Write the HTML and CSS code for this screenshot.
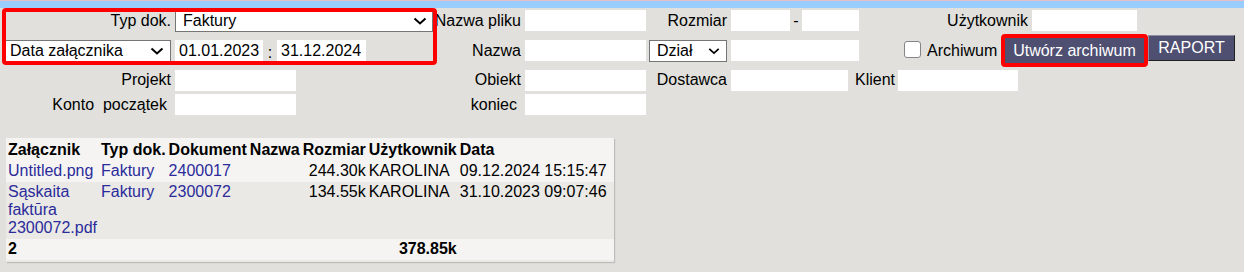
FILE: index.html
```html
<!DOCTYPE html>
<html lang="pl">
<head>
    <meta charset="UTF-8">
    <meta name="viewport" content="width=device-width, initial-scale=1.0">
    <title>Załączniki</title>
    <link rel="stylesheet" href="styles.css">
</head>
<body>
    <div class="topbar"></div>

    <form class="filters">
        <div class="mark mark-dates"></div>

        <div class="row row-1">
            <label class="lbl w171">Typ dok.</label>
            <span class="pick pick-typ">
                <select class="field"><option>Faktury</option></select>
                <svg class="chev" viewBox="0 0 14 8"><path d="M1.5 1.5 7 6.5 12.5 1.5" /></svg>
            </span>
            <label class="lbl w88">Nazwa pliku</label>
            <input class="inp w121" type="text">
            <label class="lbl w81">Rozmiar</label>
            <input class="inp w59" type="text">
            <span class="dash">-</span>
            <input class="inp w57 no-gap" type="text">
            <label class="lbl w169">Użytkownik</label>
            <input class="inp w105" type="text">
        </div>

        <div class="row row-2">
            <span class="pick pick-data">
                <select class="field"><option>Data załącznika</option></select>
                <svg class="chev" viewBox="0 0 14 8"><path d="M1.5 1.5 7 6.5 12.5 1.5" /></svg>
            </span>
            <input class="inp w88" type="text" value="01.01.2023">
            <span class="colon">:</span>
            <input class="inp w89 no-gap" type="text" value="31.12.2024">
            <label class="lbl w155">Nazwa</label>
            <input class="inp w121" type="text">
            <span class="pick pick-dzial">
                <select class="field"><option>Dział</option></select>
                <svg class="chev" viewBox="0 0 14 8"><path d="M1.5 1.5 7 6.5 12.5 1.5" /></svg>
            </span>
            <input class="inp w128" type="text">
            <input class="check" type="checkbox" id="archiwum">
            <label class="check-lbl" for="archiwum">Archiwum</label>
            <button type="button" class="btn btn-archive">Utwórz archiwum</button>
            <button type="button" class="btn btn-report">RAPORT</button>
        </div>

        <div class="row row-3">
            <label class="lbl w171">Projekt</label>
            <input class="inp w121" type="text">
            <label class="lbl w225">Obiekt</label>
            <input class="inp w121" type="text">
            <label class="lbl w81">Dostawca</label>
            <input class="inp w117" type="text">
            <label class="lbl-free">Klient</label>
            <input class="inp w120 tight" type="text">
        </div>

        <div class="row row-4">
            <label class="lbl w167">Konto&nbsp; początek</label>
            <input class="inp w121 wide-gap" type="text">
            <label class="lbl w221">koniec</label>
            <input class="inp w121 wide-gap" type="text">
        </div>
    </form>

    <div class="result">
        <table>
            <thead>
                <tr>
                    <th class="c-file">Załącznik</th>
                    <th>Typ dok.</th>
                    <th>Dokument</th>
                    <th>Nazwa</th>
                    <th>Rozmiar</th>
                    <th>Użytkownik</th>
                    <th class="c-last">Data</th>
                </tr>
            </thead>
            <tbody>
                <tr class="light">
                    <td class="c-file"><a href="#">Untitled.png</a></td>
                    <td><a href="#">Faktury</a></td>
                    <td><a href="#">2400017</a></td>
                    <td></td>
                    <td class="num">244.30k</td>
                    <td>KAROLINA</td>
                    <td class="c-last">09.12.2024 15:15:47</td>
                </tr>
                <tr>
                    <td class="c-file"><a href="#">Sąskaita faktūra 2300072.pdf</a></td>
                    <td><a href="#">Faktury</a></td>
                    <td><a href="#">2300072</a></td>
                    <td></td>
                    <td class="num">134.55k</td>
                    <td>KAROLINA</td>
                    <td class="c-last">31.10.2023 09:07:46</td>
                </tr>
                <tr class="light total">
                    <td class="c-file">2</td>
                    <td></td>
                    <td></td>
                    <td></td>
                    <td></td>
                    <td class="num">378.85k</td>
                    <td class="c-last"></td>
                </tr>
            </tbody>
        </table>
    </div>
</body>
</html>
```

FILE: styles.css
```css
body {
    margin: 0;
    background-color: #e1e0dc;
    font-family: "Liberation Sans", Arial, sans-serif;
    font-size: 16px;
    color: #000;
}
.topbar {
    height: 7px;
    border-top: 1px solid #e7bcc8;
    background-color: #99ccff;
}
.filters {
    position: relative;
}
.mark {
    position: absolute;
    border: 4px solid #ff0000;
    border-radius: 4px;
    pointer-events: none;
    z-index: 2;
}
.mark-dates {
    left: 2px;
    top: 0;
    width: 427px;
    height: 49px;
}
.row {
    display: flex;
    align-items: center;
}
.row-1 { height: 25px; }
.row-2 { height: 35px; }
.row-3 { height: 24px; }
.row-4 { height: 25px; }

.lbl {
    flex: none;
    text-align: right;
    white-space: nowrap;
}
.lbl-free {
    margin-left: 7px;
    white-space: nowrap;
}
.w167 { width: 167px; }
.w171 { width: 171px; }
.w88 { width: 88px; }
.w81 { width: 81px; }
.w169 { width: 169px; }
.w155 { width: 155px; }
.w225 { width: 225px; }
.w221 { width: 221px; }

.inp {
    flex: none;
    box-sizing: border-box;
    height: 21px;
    margin: 0 0 0 4px;
    padding: 0 4px;
    border: none;
    background-color: #fff;
    font-family: inherit;
    font-size: 16px;
    color: #000;
}
.inp.w121 { width: 121px; }
.inp.w59 { width: 59px; }
.inp.w57 { width: 57px; }
.inp.w105 { width: 105px; }
.inp.w88 { width: 88px; }
.inp.w89 { width: 89px; }
.inp.w128 { width: 128px; }
.inp.w117 { width: 117px; }
.inp.w120 { width: 120px; }
.inp.no-gap { margin-left: 0; }
.inp.tight { margin-left: 3px; }
.inp.wide-gap { margin-left: 8px; }

.dash {
    width: 12px;
    text-align: center;
}
.colon {
    width: 14px;
    text-align: center;
    padding-top: 4px;
}

.pick {
    position: relative;
    flex: none;
    display: inline-block;
}
.pick .field {
    display: block;
    box-sizing: border-box;
    width: 100%;
    height: 22px;
    margin: 0;
    border: 1px solid #767676;
    border-radius: 0;
    background-color: #fff;
    font-family: inherit;
    font-size: 16px;
    color: #000;
    appearance: none;
    -webkit-appearance: none;
}
.pick .chev {
    position: absolute;
    top: 7px;
    width: 14px;
    height: 8px;
    pointer-events: none;
}
.pick .chev path {
    fill: none;
    stroke: #000;
    stroke-width: 2;
}
.pick-typ {
    width: 258px;
    margin-left: 4px;
}
.pick-typ .field { padding: 0 0 0 7px; }
.pick-typ .chev { right: 6px; }
.pick-data {
    width: 166px;
    margin-left: 5px;
}
.pick-data .field { padding: 0 0 0 4px; }
.pick-data .chev { right: 7px; }
.pick-dzial {
    width: 78px;
    margin-left: 3px;
}
.pick-dzial .field { padding: 0 0 0 7px; }
.pick-dzial .chev { right: 7px; width: 12px; }

.check {
    flex: none;
    box-sizing: border-box;
    width: 17px;
    height: 17px;
    margin: 0 0 3px 45px;
    border: 1.5px solid #858585;
    border-radius: 3px;
    background-color: #fff;
    appearance: none;
    -webkit-appearance: none;
}
.check-lbl {
    width: 71px;
    margin-left: 6px;
    white-space: nowrap;
}
.btn {
    flex: none;
    box-sizing: border-box;
    background-color: #4f4f72;
    color: #fff;
    font-family: inherit;
    font-size: 16px;
    cursor: pointer;
}
.btn-archive {
    width: 147px;
    height: 33px;
    margin-left: 3px;
    padding: 0;
    border: 4px solid #ff0000;
    border-radius: 4px;
}
.btn-report {
    width: 87px;
    height: 26px;
    margin-bottom: 5px;
    padding: 0;
    border: 1px solid #222;
    border-top-color: #8c8ca4;
    border-left-color: #8c8ca4;
    border-radius: 0;
}

.result {
    display: inline-block;
    margin: 21px 0 0 6px;
    padding-bottom: 2px;
    background-color: #eae9e5;
    box-shadow: 1px 1px 1px #bdbbb7;
}
.result table {
    border-collapse: collapse;
}
.result th,
.result td {
    padding: 1.5px 1.5px;
    line-height: 18px;
    text-align: left;
    vertical-align: top;
    white-space: nowrap;
}
.result th {
    font-weight: bold;
    padding-top: 3px;
}
.result thead tr,
.result tr.light {
    background-color: #f5f4f2;
}
.result .c-file {
    width: 90px;
    padding-left: 2px;
    white-space: normal;
}
.result .c-last {
    padding-right: 7px;
}
.result .num {
    text-align: right;
}
.result .total td {
    font-weight: bold;
}
.result a {
    color: #2b2b9b;
    text-decoration: none;
}
```
